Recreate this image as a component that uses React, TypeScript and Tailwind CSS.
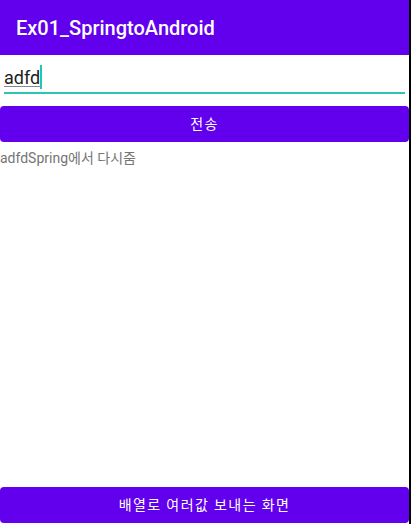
import { useState, type ReactNode } from "react";

function MaterialButton({ children }: { children: ReactNode }) {
  return (
    <button
      type="button"
      className="h-9 w-full shrink-0 rounded bg-[#6200ee] text-center text-sm font-normal tracking-widest text-white"
    >
      {children}
    </button>
  );
}

export default function App() {
  const [message, setMessage] = useState("adfd");
  const [focused, setFocused] = useState(false);

  return (
    <div className="min-h-screen bg-white pr-px font-[Roboto,'Noto_Sans_CJK_KR',sans-serif]">
      <div className="flex min-h-screen flex-col border-r-2 border-black pb-px">
        <header className="flex h-[55px] items-center bg-[#6200ee] px-4">
          <h1 className="text-xl font-medium text-white">Ex01_SpringtoAndroid</h1>
        </header>

        <main className="flex grow flex-col">
          <div className="relative mx-1 mt-2 mb-3">
            <input
              type="text"
              aria-label="Message"
              value={message}
              onChange={(event) => setMessage(event.target.value)}
              onFocus={() => setFocused(true)}
              className="block h-[31px] w-full border-b-2 border-[#2fc4b2] bg-transparent text-lg text-[#212121] underline decoration-[#888888] decoration-1 underline-offset-2 outline-none"
            />
            {!focused && (
              <span
                aria-hidden="true"
                className="absolute top-0.5 left-9 h-6 w-0.5 bg-[#1cc8b4]"
              />
            )}
          </div>

          <MaterialButton>전송</MaterialButton>

          <p className="mt-1.5 text-sm text-[#757575]">adfdSpring에서 다시줌</p>

          <div className="mt-auto flex">
            <MaterialButton>배열로 여러값 보내는 화면</MaterialButton>
          </div>
        </main>
      </div>
    </div>
  );
}
